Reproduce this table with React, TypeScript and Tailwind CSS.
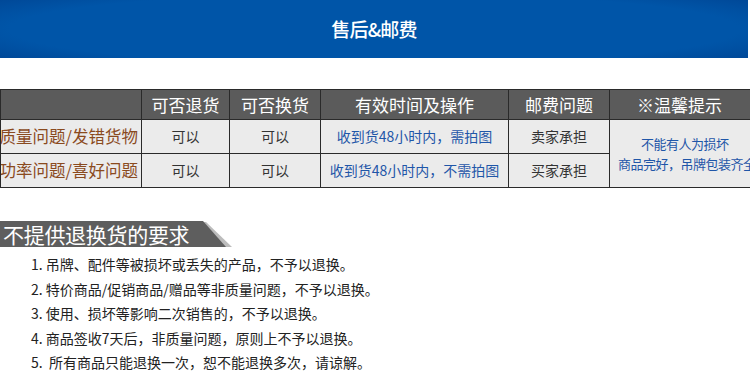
const rows = [
  {
    label: "质量问题/发错货物",
    returnable: "可以",
    exchangeable: "可以",
    time: "收到货48小时内，需拍图",
    postage: "卖家承担",
  },
  {
    label: "功率问题/喜好问题",
    returnable: "可以",
    exchangeable: "可以",
    time: "收到货48小时内，不需拍图",
    postage: "买家承担",
  },
];

const rules = [
  "1. 吊牌、配件等被损坏或丢失的产品，不予以退换。",
  "2. 特价商品/促销商品/赠品等非质量问题，不予以退换。",
  "3. 使用、损坏等影响二次销售的，不予以退换。",
  "4. 商品签收7天后，非质量问题，原则上不予以退换。",
  "5.  所有商品只能退换一次，恕不能退换多次，请谅解。",
];

export default function App() {
  return (
    <div className="w-[750px] h-[383px] overflow-hidden bg-white font-['Microsoft_YaHei','Noto_Sans_CJK_SC',sans-serif]">
      {/* BANNER */}
      <div className="h-[58px] w-[748px] flex items-center justify-center bg-[radial-gradient(ellipse_75%_95%_at_center,#0055a8_65%,#003f8c_100%)]">
        <h1 className="text-[19px] text-white tracking-[-0.8px] font-medium">售后&amp;邮费</h1>
      </div>

      {/* TABLE */}
      <table className="mt-[31px] w-[760px] table-fixed border-collapse text-center">
        <colgroup>
          <col className="w-[141px]" />
          <col className="w-[88px]" />
          <col className="w-[91px]" />
          <col className="w-[188px]" />
          <col className="w-[101px]" />
          <col className="w-[151px]" />
        </colgroup>
        <thead>
          <tr className="h-[30px] bg-[#5b5b5b] text-[17px] text-white">
            <th className="border border-[#2a2a2a] font-normal"></th>
            <th className="border border-[#2a2a2a] font-normal">可否退货</th>
            <th className="border border-[#2a2a2a] font-normal">可否换货</th>
            <th className="border border-[#2a2a2a] font-normal">有效时间及操作</th>
            <th className="border border-[#2a2a2a] font-normal">邮费问题</th>
            <th className="border border-[#2a2a2a] font-normal text-left pl-[27px]">※温馨提示</th>
          </tr>
        </thead>
        <tbody>
          {rows.map((r, i) => (
            <tr key={r.label} className="h-[34px] bg-[#ebebeb]">
              <td className="border border-[#2a2a2a] overflow-hidden whitespace-nowrap text-right pr-[3px] text-[16.5px] text-[#8a4a1e]">
                <span className="inline-block -ml-[20px]">{r.label}</span>
              </td>
              <td className="border border-[#2a2a2a] text-[14px] text-[#333]">{r.returnable}</td>
              <td className="border border-[#2a2a2a] text-[14px] text-[#333]">{r.exchangeable}</td>
              <td className="border border-[#2a2a2a] text-[14px] text-[#1f56a8] whitespace-nowrap">{r.time}</td>
              <td className="border border-[#2a2a2a] text-[14px] text-[#333]">{r.postage}</td>
              {i === 0 && (
                <td
                  rowSpan={2}
                  className="border border-[#2a2a2a] text-left pl-[8px] whitespace-nowrap text-[13px] leading-[20px] text-[#1f56a8] tracking-[-0.5px] overflow-hidden"
                >
                  <div className="pl-[23px]">不能有人为损坏</div>
                  <div>商品完好，吊牌包装齐全</div>
                </td>
              )}
            </tr>
          ))}
        </tbody>
      </table>

      {/* SECTION TITLE */}
      <div className="relative mt-[33px] h-[26px] w-[232px]">
        <div className="absolute inset-0 left-[3px] top-[1px] bg-[#bcbcbc] [clip-path:polygon(0_0,203px_0,229px_100%,0_100%)]" />
        <div className="absolute inset-0 bg-[#5e5e5e] [clip-path:polygon(0_0,203px_0,226px_100%,0_100%)] flex items-center pl-[3px]">
          <span className="text-[21px] leading-none text-white tracking-[-0.3px]">不提供退换货的要求</span>
        </div>
      </div>

      {/* RULES */}
      <ol className="mt-[8px] pl-[31px] flex flex-col gap-[5px] text-[14px] leading-[19.5px] text-[#222]">
        {rules.map((rule) => (
          <li key={rule} className="whitespace-pre">{rule}</li>
        ))}
      </ol>
    </div>
  );
}
